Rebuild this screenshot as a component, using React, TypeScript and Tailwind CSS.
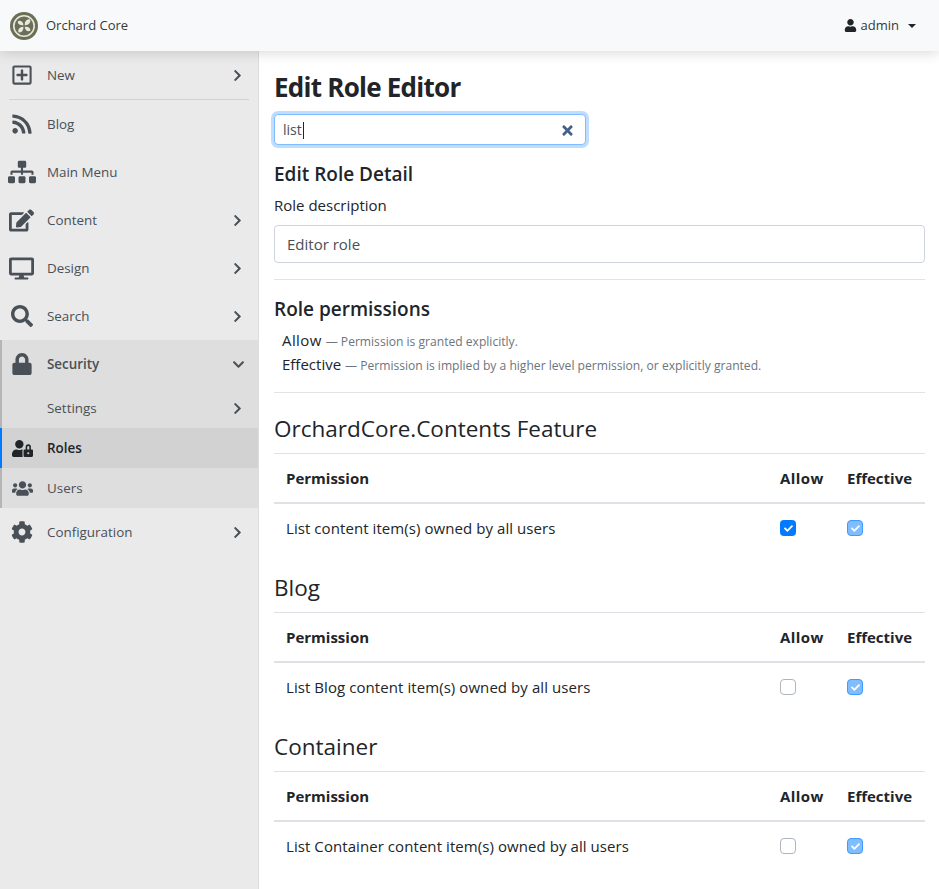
import { FaRegPlusSquare, FaRss, FaSitemap, FaEdit, FaDesktop, FaSearch, FaLock, FaUserLock, FaUsers, FaCog, FaChevronRight, FaChevronDown, FaUser, FaTimes, FaCheck } from "react-icons/fa";
import type { ReactNode } from "react";

const fontStack = { fontFamily: '"Open Sans", "Noto Sans", sans-serif' };

const Logo = () => (
  <svg width="28" height="28" viewBox="0 0 28 28">
    <circle cx="14" cy="14" r="14" fill="#6b6f55" />
    <circle cx="14" cy="14" r="10.2" fill="none" stroke="#e8e9e0" strokeWidth="1.6" />
    <path d="M13.4 13.2C10 13.4 7.6 12 7.8 9.4 9.8 7.6 13.4 9.4 13.4 13.2z" fill="#e8e9e0" />
    <path d="M14.8 13.2C14.4 9.6 16.4 7 19.8 7.2 21.6 10 18.6 13.4 14.8 13.2z" fill="#e8e9e0" />
    <path d="M14.8 14.8C18 14.4 20.6 15.8 20.4 18.6 18.2 20.6 14.8 18.4 14.8 14.8z" fill="#e8e9e0" />
    <path d="M13.4 14.8C13.6 18 12 20.8 8.8 20.4 7 18 9.8 14.6 13.4 14.8z" fill="#e8e9e0" />
  </svg>
);

const MenuItem = ({ icon, label, chevron = false }: { icon: ReactNode; label: string; chevron?: boolean }) => (
  <div className="flex h-12 items-center text-[#495057]">
    <div className="mr-[4px] flex w-[43px] shrink-0 justify-center text-[#495057]">{icon}</div>
    <span className="flex-1 text-[13.4px]">{label}</span>
    {chevron && <FaChevronRight className="mr-[14px] text-[13px]" />}
  </div>
);

const PermissionTable = ({ title, text, allow }: { title: string; text: string; allow: boolean }) => (
  <div>
    <h3 className="mb-[9px] flex h-[29px] items-center text-[22.5px] leading-none font-normal text-[#212529]">{title}</h3>
    <div className="border-t border-[#dee2e6]">
      <div className="flex h-[50px] items-center border-b-2 border-[#dee2e6] text-[15px] text-[#212529]">
        <b className="flex-1 pl-3 font-bold">Permission</b>
        <b className="w-[67px] font-bold tracking-[0.4px]">Allow</b>
        <b className="w-[78px] font-bold">Effective</b>
      </div>
      <div className="flex h-[48px] items-center text-[15px] tracking-[0.07px] text-[#212529]">
        <span className="flex-1 pl-3">{text}</span>
        <div className="w-[67px]">
          {allow ? (
            <span className="flex h-4 w-4 items-center justify-center rounded-[4px] bg-[#007bff] text-[9px] text-white">
              <FaCheck />
            </span>
          ) : (
            <span className="block h-4 w-4 rounded-[4px] border border-[#adb5bd] bg-white" />
          )}
        </div>
        <div className="w-[78px]">
          <span className="flex h-4 w-4 items-center justify-center rounded-[4px] border border-[#3f9bff] bg-[#80bdff] text-[9px] text-white">
            <FaCheck />
          </span>
        </div>
      </div>
    </div>
  </div>
);

export default function App() {
  return (
    <div className="flex h-[889px] flex-col overflow-hidden bg-white" style={fontStack}>
      <header className="relative z-10 flex h-[51px] shrink-0 items-center justify-between bg-[#f8f9fa] pr-[23px] pl-[10px] shadow-[0_2px_12px_rgba(0,0,0,0.15)]">
        <div className="flex items-center gap-2">
          <Logo />
          <span className="text-[13px] text-[#343a40]">Orchard Core</span>
        </div>
        <div className="flex items-center text-[13px] text-[#343a40]">
          <FaUser className="mr-[4px] text-[13px] text-[#212529]" />
          <span>admin</span>
          <span className="ml-[9px] h-0 w-0 border-x-[4px] border-t-[4px] border-x-transparent border-t-[#212529]" />
        </div>
      </header>
      <div className="flex min-h-0 flex-1">
        <aside className="w-[259px] shrink-0 border-r border-[#dcdcdc] bg-[#eaeaea]">
          <MenuItem icon={<FaRegPlusSquare className="text-[22px]" />} label="New" chevron />
          <div className="mx-[9px] border-t border-[#d2d2d2]" />
          <MenuItem icon={<FaRss className="text-[22px]" />} label="Blog" />
          <MenuItem icon={<FaSitemap className="text-[28px]" />} label="Main Menu" />
          <MenuItem icon={<FaEdit className="text-[25px]" />} label="Content" chevron />
          <MenuItem icon={<FaDesktop className="text-[25px]" />} label="Design" chevron />
          <MenuItem icon={<FaSearch className="text-[22px]" />} label="Search" chevron />
          <div className="border-l-2 border-[#b5b5b5] bg-[#dedede]">
            <div className="-ml-[2px] flex h-12 items-center text-[#495057]">
              <div className="mr-[4px] flex w-[43px] shrink-0 justify-center text-[22px]"><FaLock /></div>
              <span className="flex-1 text-[13.4px] font-semibold">Security</span>
              <FaChevronDown className="mr-[13px] text-[13px]" />
            </div>
            <div className="-ml-[2px] flex h-10 items-center pl-[47px] text-[#495057]">
              <span className="flex-1 text-[13.4px]">Settings</span>
              <FaChevronRight className="mr-[14px] text-[13px]" />
            </div>
            <div className="-ml-[2px] flex h-10 items-center border-l-2 border-[#007bff] bg-[#d2d2d2] text-[#212529]">
              <div className="mr-[4px] flex w-[41px] shrink-0 justify-center text-[21px]"><FaUserLock /></div>
              <span className="text-[13.4px] font-semibold">Roles</span>
            </div>
            <div className="flex h-10 items-center text-[#495057]">
              <div className="mr-[4px] flex w-[41px] shrink-0 justify-center text-[21px]"><FaUsers /></div>
              <span className="text-[13.4px]">Users</span>
            </div>
          </div>
          <MenuItem icon={<FaCog className="text-[22px]" />} label="Configuration" chevron />
        </aside>
        <main className="min-w-0 flex-1 pr-[14px] pl-[15px]">
          <h1 className="mt-[19px] flex h-[34px] items-center text-[26px] leading-none font-bold tracking-[-0.75px] text-[#212529]">Edit Role Editor</h1>
          <div className="mt-[10px] flex h-[31px] w-[312px] items-center justify-between rounded-[4px] border border-[#80bdff] bg-white pt-px pr-[10px] pl-[8px] text-sm text-[#495057] shadow-[0_0_0_3px_rgba(0,123,255,0.25)]">
            <span className="flex items-center">list<span className="ml-px h-[17px] w-px bg-[#212529]" /></span>
            <FaTimes className="text-[15px] text-[#456088]" />
          </div>
          <h2 className="mt-[16px] flex h-[27px] items-center text-[19px] leading-none font-semibold text-[#212529]">Edit Role Detail</h2>
          <div className="mt-[5px] flex h-6 items-center text-[15px] text-[#212529]">Role description</div>
          <div className="mt-[8px] flex h-[38px] items-center rounded-[4px] border border-[#ced4da] px-3 pt-px text-[15px] text-[#495057]">Editor role</div>
          <hr className="mt-4 border-[#e3e3e3]" />
          <h2 className="mt-[16px] flex h-[27px] items-center text-[19px] leading-none font-semibold text-[#212529]">Role permissions</h2>
          <div className="mt-[6px] px-2 text-[#212529]">
            <div className="h-6 text-[15px]"><span className="tracking-[0.4px]">Allow</span> <span className="text-[12.1px] text-[#6c757d]">— Permission is granted explicitly.</span></div>
            <div className="h-6 text-[15px]">Effective <span className="text-[12.1px] text-[#6c757d]">— Permission is implied by a higher level permission, or explicitly granted.</span></div>
          </div>
          <hr className="mt-[15px] border-[#e3e3e3]" />
          <div className="mt-[22px] flex flex-col gap-[22px]">
            <PermissionTable title="OrchardCore.Contents Feature" text="List content item(s) owned by all users" allow />
            <PermissionTable title="Blog" text="List Blog content item(s) owned by all users" allow={false} />
            <PermissionTable title="Container" text="List Container content item(s) owned by all users" allow={false} />
          </div>
        </main>
      </div>
    </div>
  );
}
